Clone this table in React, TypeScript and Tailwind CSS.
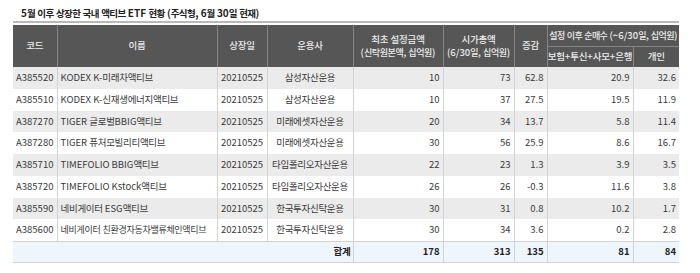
const rows = [
  ["A385520", "KODEX K-미래차액티브", "20210525", "삼성자산운용", "10", "73", "62.8", "20.9", "32.6"],
  ["A385510", "KODEX K-신재생에너지액티브", "20210525", "삼성자산운용", "10", "37", "27.5", "19.5", "11.9"],
  ["A387270", "TIGER 글로벌BBIG액티브", "20210525", "미래에셋자산운용", "20", "34", "13.7", "5.8", "11.4"],
  ["A387280", "TIGER 퓨처모빌리티액티브", "20210525", "미래에셋자산운용", "30", "56", "25.9", "8.6", "16.7"],
  ["A385710", "TIMEFOLIO BBIG액티브", "20210525", "타임폴리오자산운용", "22", "23", "1.3", "3.9", "3.5"],
  ["A385720", "TIMEFOLIO Kstock액티브", "20210525", "타임폴리오자산운용", "26", "26", "-0.3", "11.6", "3.8"],
  ["A385590", "네비게이터 ESG액티브", "20210525", "한국투자신탁운용", "30", "31", "0.8", "10.2", "1.7"],
  ["A385600", "네비게이터 친환경자동차밸류체인액티브", "20210525", "한국투자신탁운용", "30", "34", "3.6", "0.2", "2.8"],
];

const widths = [44, 160, 50, 86, 90, 71, 33, 86, 46];

// Hangul runs get their own size/tracking so widths land near the Malgun Gothic original
function K({ s, k = "text-[9.5px] tracking-[-0.3px]" }: { s: string; k?: string }) {
  return (
    <>
      {s.split(/([\uAC00-\uD7A3]+)/).map((part, i) =>
        /[\uAC00-\uD7A3]/.test(part) ? (
          <span key={i} className={k}>
            {part}
          </span>
        ) : (
          part
        )
      )}
    </>
  );
}

const hk = "text-[9.5px] tracking-[-0.2px]";
const cell = "border-l border-[#d2d2d2] text-right pr-[3px]";
const hcell = "font-medium border-l border-[#858585]";

export default function App() {
  return (
    <div
      className="w-[700px] h-[273px] bg-white pl-[13px] pt-[5px] text-[#3a3a3a]"
      style={{ fontFamily: '"Noto Sans CJK KR", "Noto Sans", sans-serif' }}
    >
      <div className="pl-[8px] h-[16px] text-[10px] font-bold leading-[16px] text-[#222] whitespace-nowrap">
        <K s="5월 이후 상장한 국내 액티브 ETF 현황 (주식형, 6월 30일 현재)" k="text-[9.5px] tracking-[-0.6px]" />
      </div>
      <div className="w-[666px] h-[2px] bg-[#b8b8b8]" />
      <table className="mt-[2px] w-[666px] table-fixed border-collapse text-[9.5px] leading-none">
        <colgroup>
          {widths.map((w, i) => (
            <col key={i} style={{ width: w }} />
          ))}
        </colgroup>
        <thead className="bg-[#565656] text-[#ececec]">
          <tr className="h-[21px]">
            <th rowSpan={2} className="font-medium">
              <K s="코드" k={hk} />
            </th>
            <th rowSpan={2} className={hcell}>
              <K s="이름" k={hk} />
            </th>
            <th rowSpan={2} className={hcell}>
              <K s="상장일" k={hk} />
            </th>
            <th rowSpan={2} className={hcell}>
              <K s="운용사" k={hk} />
            </th>
            <th rowSpan={2} className={`${hcell} leading-[13px] whitespace-nowrap`}>
              <K s="최초 설정금액" k={hk} />
              <br />
              <K s="(신탁원본액, 십억원)" k="text-[9px] tracking-[-0.4px]" />
            </th>
            <th rowSpan={2} className={`${hcell} leading-[13px] whitespace-nowrap`}>
              <K s="시가총액" k={hk} />
              <br />
              <K s="(6/30일, 십억원)" k="text-[9px] tracking-[-0.4px]" />
            </th>
            <th rowSpan={2} className={hcell}>
              <K s="증감" k={hk} />
            </th>
            <th colSpan={2} className={`${hcell} whitespace-nowrap`}>
              <K s="설정 이후 순매수 (~6/30일, 십억원)" k="text-[9px] tracking-[-0.6px]" />
            </th>
          </tr>
          <tr className="h-[21px]">
            <th className={`${hcell} border-t whitespace-nowrap`}>
              <K s="보험+투신+사모+은행" k={hk} />
            </th>
            <th className={`${hcell} border-t`}>
              <K s="개인" k={hk} />
            </th>
          </tr>
        </thead>
        <tbody>
          {rows.map((r, i) => (
            <tr key={r[0]} className={`h-[21.75px] ${i % 2 === 0 ? "bg-[#ebebeb]" : "bg-white"}`}>
              <td className="text-center">{r[0]}</td>
              <td className="border-l border-[#d2d2d2] pl-[3px] whitespace-nowrap">
                <K s={r[1]} k={i === 7 ? "text-[9px] tracking-[-0.3px]" : undefined} />
              </td>
              <td className="border-l border-[#d2d2d2] text-center">{r[2]}</td>
              <td className="border-l border-[#d2d2d2] text-center whitespace-nowrap">
                <K s={r[3]} />
              </td>
              <td className={cell}>{r[4]}</td>
              <td className={cell}>{r[5]}</td>
              <td className={cell}>{r[6]}</td>
              <td className={cell}>{r[7]}</td>
              <td className={cell}>{r[8]}</td>
            </tr>
          ))}
          <tr className="h-[21px] bg-[#eef6fc] font-bold text-[#222] border-y border-[#d2d2d2]">
            <td colSpan={4} className="text-right pr-[2px]">
              <K s="합계" />
            </td>
            <td className={cell}>178</td>
            <td className={cell}>313</td>
            <td className={cell}>135</td>
            <td className={cell}>81</td>
            <td className={cell}>84</td>
          </tr>
        </tbody>
      </table>
    </div>
  );
}
